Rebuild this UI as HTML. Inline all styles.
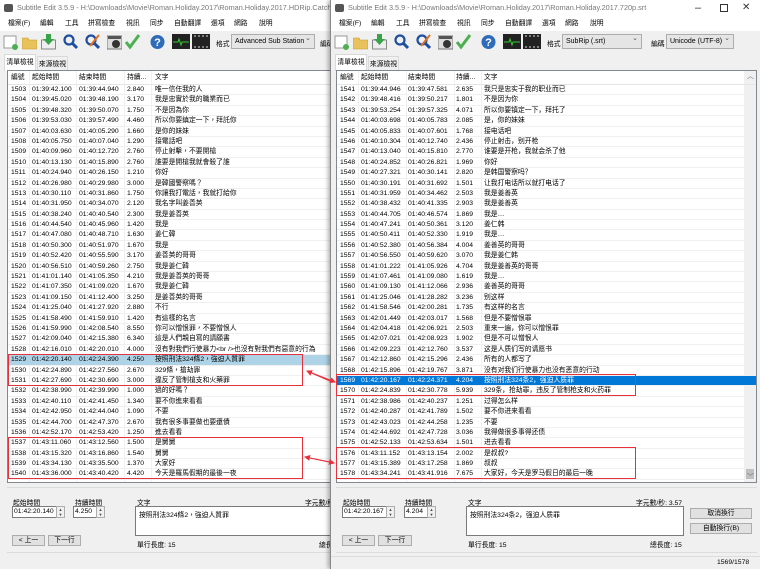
<!DOCTYPE html>
<html><head><meta charset="utf-8">
<style>
*{box-sizing:border-box;margin:0;padding:0}
body{width:760px;height:569px;overflow:hidden;background:#f0f0f0;font-family:"Liberation Sans","Noto Sans CJK TC",sans-serif;font-size:6.8px;color:#000;position:relative}
.win{position:absolute;top:0;height:569px;background:#f0f0f0;overflow:hidden}
#L{left:0;width:331px}
#R{left:330px;width:430px;border-left:1px solid #888;box-shadow:-2px 0 4px rgba(0,0,0,.3);font-family:"Liberation Sans","Noto Sans CJK SC",sans-serif}
.title{position:absolute;top:0;left:0;right:0;height:17px;background:#fff;color:#777;font-size:7.3px;line-height:16px;padding-left:17px;white-space:nowrap}
.title .ic{position:absolute;left:4px;top:4px;width:9px;height:8px;background:#555;border-radius:2px}
.menu{position:absolute;top:17px;left:0;right:0;height:14px;background:#fff;white-space:nowrap}
.menu span{position:absolute;line-height:14px;font-size:6.8px}
.tb{position:absolute;top:32px;left:0;right:0;height:20px}
.i{position:absolute;top:1px;width:15px;height:17px}
.cb{position:absolute;top:34px;height:15px;border:1px solid #adadad;background:#e5e5e5;line-height:13px;padding-left:3px;font-size:7px;white-space:nowrap;overflow:hidden}
.cb:after{content:"⌄";position:absolute;right:3px;top:-3px;color:#555}
.lab{position:absolute;font-size:6.8px;white-space:nowrap}
.tabs{position:absolute;top:54px;left:4px;height:16px}
.tab{position:absolute;top:0;height:16px;line-height:15px;text-align:center;border:1px solid #d9d9d9;border-bottom:none;font-size:6.8px;white-space:nowrap}
.list{position:absolute;top:70px;height:413px;background:#fff;border:1px solid #828790;overflow:hidden}
.hd{height:14px;line-height:14px;border-bottom:1px solid #e5e5e5;white-space:nowrap;position:relative}
.r{height:10.4px;line-height:10.4px;white-space:nowrap;position:relative;border-bottom:1px solid #f0f0f0}
.r span,.hd span{position:absolute;top:0}
.c1{left:3px}.c2{left:24px}.c3{left:71px}.c4{left:119px}.c5{left:147px}
.vl{position:absolute;top:0;bottom:0;width:1px;background:#f0f0f0}
.sel1{background:#aed3e6}
.sel2{background:#0078d7;color:#fff}
.box{position:absolute;border:1.5px solid #e8303a}
.inp{position:absolute;background:#fff;border:1px solid #7a7a7a;height:12px;line-height:10px;padding-left:1px;font-size:6.8px}
.spin{position:absolute;width:9px;height:12px;border:1px solid #adadad;background:#f0f0f0;font-size:4px;line-height:5px;text-align:center;color:#444}
.btn{position:absolute;height:11px;border:1px solid #adadad;background:#e1e1e1;font-size:6.8px;line-height:9px;text-align:center}
.ta{position:absolute;background:#fff;border:1px solid #7a7a7a;padding:2px 3px;font-size:6.8px}
.grp{position:absolute;top:487px;height:66px;border-top:1px solid #dcdcdc;border-bottom:1px solid #dcdcdc}
</style></head><body>

<div class="win" id="L">
 <div class="title"><div class="ic"></div>Subtitle Edit 3.5.9 - H:\Downloads\Movie\Roman.Holiday.2017\Roman.Holiday.2017.HDRip.CatchPlay.srt</div>
 <div class="menu"><span style="left:8px">檔案(F)</span><span style="left:40px">編輯</span><span style="left:65px">工具</span><span style="left:88px">拼寫檢查</span><span style="left:126px">視訊</span><span style="left:150px">同步</span><span style="left:174px">自動翻譯</span><span style="left:211px">選項</span><span style="left:234px">網路</span><span style="left:259px">說明</span></div>
 <div class="tb">
  <svg class="i" style="left:3px" viewBox="0 0 15 17"><rect x="1" y="3" width="12" height="12" fill="#fff" stroke="#999"/><circle cx="12" cy="14" r="3" fill="#4caf50"/></svg>
  <svg class="i" style="left:22px" viewBox="0 0 15 17"><path d="M0 5h6l1 2h8v9H0z" fill="#e8c25a" stroke="#c49a2a" stroke-width=".6"/></svg>
  <svg class="i" style="left:41px" viewBox="0 0 15 17"><rect x="0.5" y="7" width="14" height="9" fill="#eee" stroke="#888"/><path d="M5 1h5v5h3l-5.5 6L2 6h3z" fill="#3aa34a"/></svg>
  <svg class="i" style="left:63px" viewBox="0 0 15 17"><circle cx="6" cy="7" r="4.5" fill="none" stroke="#1f4ea1" stroke-width="2.2"/><path d="M9 10l5 5" stroke="#1f4ea1" stroke-width="3"/></svg>
  <svg class="i" style="left:85px" viewBox="0 0 15 17"><circle cx="6" cy="7" r="4.5" fill="none" stroke="#1f4ea1" stroke-width="2.2"/><path d="M9 10l5 5" stroke="#1f4ea1" stroke-width="3"/><path d="M14 2L5 13" stroke="#e07020" stroke-width="2"/></svg>
  <svg class="i" style="left:107px" viewBox="0 0 15 17"><rect x="0" y="3" width="15" height="13" fill="#ddd" stroke="#777"/><rect x="1" y="3" width="13" height="3" fill="#555"/><circle cx="9" cy="11" r="4" fill="#333"/></svg>
  <svg class="i" style="left:125px" viewBox="0 0 15 17"><path d="M1 9l4 5L14 2" fill="none" stroke="#4caf50" stroke-width="3"/></svg>
  <svg class="i" style="left:150px" viewBox="0 0 15 17"><circle cx="7.5" cy="9" r="7" fill="#2e6bb8"/><text x="7.5" y="13" font-size="11" fill="#fff" text-anchor="middle" font-family="Liberation Sans" font-weight="bold">?</text></svg>
  <svg class="i" style="left:172px;width:18px" viewBox="0 0 18 17"><rect x="0" y="1" width="18" height="15" fill="#222"/><path d="M1 9h5l1-3 2 6 1-3h7" stroke="#3c3" fill="none"/></svg>
  <svg class="i" style="left:192px;width:18px" viewBox="0 0 18 17"><rect x="0" y="1" width="18" height="15" fill="#222"/><path d="M2 3h2M6 3h2M10 3h2M14 3h2M2 14h2M6 14h2M10 14h2M14 14h2" stroke="#ddd"/></svg>
 </div>
 <div class="lab" style="left:216px;top:38px">格式</div>
 <div class="cb" style="left:231px;width:84px">Advanced Sub Station</div>
 <div class="lab" style="left:320px;top:38px">編碼</div>
 <div class="tabs"><div class="tab" style="left:0;width:32px;background:#fff;height:17px">清單檢視</div><div class="tab" style="left:33px;width:31px;top:2px;height:14px">來源檢視</div></div>
 <div class="list" style="left:7px;width:330px">
  <div class="vl" style="left:21px"></div><div class="vl" style="left:68px"></div><div class="vl" style="left:116px"></div><div class="vl" style="left:143px"></div>
  <div class="hd"><span class="c1">編號</span><span class="c2">起始時間</span><span class="c3">結束時間</span><span class="c4">持續...</span><span class="c5">文字</span></div>
  <div class="r"><span class="c1">1503</span><span class="c2">01:39:42.100</span><span class="c3">01:39:44.940</span><span class="c4">2.840</span><span class="c5">唯一信任我的人</span></div>
  <div class="r"><span class="c1">1504</span><span class="c2">01:39:45.020</span><span class="c3">01:39:48.190</span><span class="c4">3.170</span><span class="c5">我是忠實於我的職業而已</span></div>
  <div class="r"><span class="c1">1505</span><span class="c2">01:39:48.320</span><span class="c3">01:39:50.070</span><span class="c4">1.750</span><span class="c5">不是因為你</span></div>
  <div class="r"><span class="c1">1506</span><span class="c2">01:39:53.030</span><span class="c3">01:39:57.490</span><span class="c4">4.460</span><span class="c5">所以你要鎮定一下，拜託你</span></div>
  <div class="r"><span class="c1">1507</span><span class="c2">01:40:03.630</span><span class="c3">01:40:05.290</span><span class="c4">1.660</span><span class="c5">是你的妹妹</span></div>
  <div class="r"><span class="c1">1508</span><span class="c2">01:40:05.750</span><span class="c3">01:40:07.040</span><span class="c4">1.290</span><span class="c5">接電話吧</span></div>
  <div class="r"><span class="c1">1509</span><span class="c2">01:40:09.960</span><span class="c3">01:40:12.720</span><span class="c4">2.760</span><span class="c5">停止射擊，不要開槍</span></div>
  <div class="r"><span class="c1">1510</span><span class="c2">01:40:13.130</span><span class="c3">01:40:15.890</span><span class="c4">2.760</span><span class="c5">誰要是開槍我就會殺了誰</span></div>
  <div class="r"><span class="c1">1511</span><span class="c2">01:40:24.940</span><span class="c3">01:40:26.150</span><span class="c4">1.210</span><span class="c5">你好</span></div>
  <div class="r"><span class="c1">1512</span><span class="c2">01:40:26.980</span><span class="c3">01:40:29.980</span><span class="c4">3.000</span><span class="c5">是韓國警察嗎？</span></div>
  <div class="r"><span class="c1">1513</span><span class="c2">01:40:30.110</span><span class="c3">01:40:31.860</span><span class="c4">1.750</span><span class="c5">你讓我打電話，我就打給你</span></div>
  <div class="r"><span class="c1">1514</span><span class="c2">01:40:31.950</span><span class="c3">01:40:34.070</span><span class="c4">2.120</span><span class="c5">我名字叫姜善英</span></div>
  <div class="r"><span class="c1">1515</span><span class="c2">01:40:38.240</span><span class="c3">01:40:40.540</span><span class="c4">2.300</span><span class="c5">我是姜善英</span></div>
  <div class="r"><span class="c1">1516</span><span class="c2">01:40:44.540</span><span class="c3">01:40:45.960</span><span class="c4">1.420</span><span class="c5">我是</span></div>
  <div class="r"><span class="c1">1517</span><span class="c2">01:40:47.080</span><span class="c3">01:40:48.710</span><span class="c4">1.630</span><span class="c5">姜仁韓</span></div>
  <div class="r"><span class="c1">1518</span><span class="c2">01:40:50.300</span><span class="c3">01:40:51.970</span><span class="c4">1.670</span><span class="c5">我是</span></div>
  <div class="r"><span class="c1">1519</span><span class="c2">01:40:52.420</span><span class="c3">01:40:55.590</span><span class="c4">3.170</span><span class="c5">姜善英的哥哥</span></div>
  <div class="r"><span class="c1">1520</span><span class="c2">01:40:56.510</span><span class="c3">01:40:59.260</span><span class="c4">2.750</span><span class="c5">我是姜仁韓</span></div>
  <div class="r"><span class="c1">1521</span><span class="c2">01:41:01.140</span><span class="c3">01:41:05.350</span><span class="c4">4.210</span><span class="c5">我是姜善英的哥哥</span></div>
  <div class="r"><span class="c1">1522</span><span class="c2">01:41:07.350</span><span class="c3">01:41:09.020</span><span class="c4">1.670</span><span class="c5">我是姜仁韓</span></div>
  <div class="r"><span class="c1">1523</span><span class="c2">01:41:09.150</span><span class="c3">01:41:12.400</span><span class="c4">3.250</span><span class="c5">是姜善英的哥哥</span></div>
  <div class="r"><span class="c1">1524</span><span class="c2">01:41:25.040</span><span class="c3">01:41:27.920</span><span class="c4">2.880</span><span class="c5">不行</span></div>
  <div class="r"><span class="c1">1525</span><span class="c2">01:41:58.490</span><span class="c3">01:41:59.910</span><span class="c4">1.420</span><span class="c5">有這樣的名言</span></div>
  <div class="r"><span class="c1">1526</span><span class="c2">01:41:59.990</span><span class="c3">01:42:08.540</span><span class="c4">8.550</span><span class="c5">你可以憎恨罪，不要憎恨人</span></div>
  <div class="r"><span class="c1">1527</span><span class="c2">01:42:09.040</span><span class="c3">01:42:15.380</span><span class="c4">6.340</span><span class="c5">這是人們親自寫的請願書</span></div>
  <div class="r"><span class="c1">1528</span><span class="c2">01:42:16.010</span><span class="c3">01:42:20.010</span><span class="c4">4.000</span><span class="c5">沒有對我們行使暴力&lt;br /&gt;也沒有對我們有惡意的行為</span></div>
  <div class="r sel1"><span class="c1">1529</span><span class="c2">01:42:20.140</span><span class="c3">01:42:24.390</span><span class="c4">4.250</span><span class="c5">按照刑法324條2，強迫人質罪</span></div>
  <div class="r"><span class="c1">1530</span><span class="c2">01:42:24.890</span><span class="c3">01:42:27.560</span><span class="c4">2.670</span><span class="c5">329條，搶劫罪</span></div>
  <div class="r"><span class="c1">1531</span><span class="c2">01:42:27.690</span><span class="c3">01:42:30.690</span><span class="c4">3.000</span><span class="c5">違反了管制槍支和火藥罪</span></div>
  <div class="r"><span class="c1">1532</span><span class="c2">01:42:38.990</span><span class="c3">01:42:39.990</span><span class="c4">1.000</span><span class="c5">過的好嗎？</span></div>
  <div class="r"><span class="c1">1533</span><span class="c2">01:42:40.110</span><span class="c3">01:42:41.450</span><span class="c4">1.340</span><span class="c5">要不你進來看看</span></div>
  <div class="r"><span class="c1">1534</span><span class="c2">01:42:42.950</span><span class="c3">01:42:44.040</span><span class="c4">1.090</span><span class="c5">不要</span></div>
  <div class="r"><span class="c1">1535</span><span class="c2">01:42:44.700</span><span class="c3">01:42:47.370</span><span class="c4">2.670</span><span class="c5">我有很多事要做也要還債</span></div>
  <div class="r"><span class="c1">1536</span><span class="c2">01:42:52.170</span><span class="c3">01:42:53.420</span><span class="c4">1.250</span><span class="c5">進去看看</span></div>
  <div class="r"><span class="c1">1537</span><span class="c2">01:43:11.060</span><span class="c3">01:43:12.560</span><span class="c4">1.500</span><span class="c5">是舅舅</span></div>
  <div class="r"><span class="c1">1538</span><span class="c2">01:43:15.320</span><span class="c3">01:43:16.860</span><span class="c4">1.540</span><span class="c5">舅舅</span></div>
  <div class="r"><span class="c1">1539</span><span class="c2">01:43:34.130</span><span class="c3">01:43:35.500</span><span class="c4">1.370</span><span class="c5">大家好</span></div>
  <div class="r"><span class="c1">1540</span><span class="c2">01:43:36.000</span><span class="c3">01:43:40.420</span><span class="c4">4.420</span><span class="c5">今天是羅馬假期的最後一夜</span></div>
 </div>
 <div class="grp" style="left:7px;width:330px"></div>
 <div class="lab" style="left:13px;top:497px">起始時間</div>
 <div class="inp" style="left:12px;top:506px;width:45px">01:42:20.140</div><div class="spin" style="left:56px;top:506px">▲<br>▼</div>
 <div class="lab" style="left:75px;top:497px">持續時間</div>
 <div class="inp" style="left:73px;top:506px;width:24px">4.250</div><div class="spin" style="left:96px;top:506px">▲<br>▼</div>
 <div class="lab" style="left:137px;top:497px">文字</div>
 <div class="lab" style="left:305px;top:497px">字元數/秒</div>
 <div class="ta" style="left:135px;top:506px;width:200px;height:30px">按照刑法324條2，強迫人質罪</div>
 <div class="btn" style="left:12px;top:535px;width:33px">&lt; 上一</div>
 <div class="btn" style="left:48px;top:535px;width:33px">下一行</div>
 <div class="lab" style="left:137px;top:539px">單行長度: 15</div>
 <div class="lab" style="left:319px;top:539px">總長</div>
</div>

<div class="win" id="R">
 <div class="title"><div class="ic"></div>Subtitle Edit 3.5.9 - H:\Downloads\Movie\Roman.Holiday.2017\Roman.Holiday.2017.720p.srt
  <span style="position:absolute;left:364px;top:0;color:#333;font-size:11px">–</span>
  <span style="position:absolute;left:389px;top:4px;width:8px;height:8px;border:1px solid #333"></span>
  <span style="position:absolute;left:411px;top:0;color:#333;font-size:10px">✕</span></div>
 <div class="menu"><span style="left:8px">檔案(F)</span><span style="left:40px">編輯</span><span style="left:65px">工具</span><span style="left:88px">拼寫檢查</span><span style="left:126px">視訊</span><span style="left:150px">同步</span><span style="left:174px">自動翻譯</span><span style="left:211px">選項</span><span style="left:234px">網路</span><span style="left:259px">說明</span></div>
 <div class="tb">
  <svg class="i" style="left:3px" viewBox="0 0 15 17"><rect x="1" y="3" width="12" height="12" fill="#fff" stroke="#999"/><circle cx="12" cy="14" r="3" fill="#4caf50"/></svg>
  <svg class="i" style="left:22px" viewBox="0 0 15 17"><path d="M0 5h6l1 2h8v9H0z" fill="#e8c25a" stroke="#c49a2a" stroke-width=".6"/></svg>
  <svg class="i" style="left:41px" viewBox="0 0 15 17"><rect x="0.5" y="7" width="14" height="9" fill="#eee" stroke="#888"/><path d="M5 1h5v5h3l-5.5 6L2 6h3z" fill="#3aa34a"/></svg>
  <svg class="i" style="left:63px" viewBox="0 0 15 17"><circle cx="6" cy="7" r="4.5" fill="none" stroke="#1f4ea1" stroke-width="2.2"/><path d="M9 10l5 5" stroke="#1f4ea1" stroke-width="3"/></svg>
  <svg class="i" style="left:85px" viewBox="0 0 15 17"><circle cx="6" cy="7" r="4.5" fill="none" stroke="#1f4ea1" stroke-width="2.2"/><path d="M9 10l5 5" stroke="#1f4ea1" stroke-width="3"/><path d="M14 2L5 13" stroke="#e07020" stroke-width="2"/></svg>
  <svg class="i" style="left:107px" viewBox="0 0 15 17"><rect x="0" y="3" width="15" height="13" fill="#ddd" stroke="#777"/><rect x="1" y="3" width="13" height="3" fill="#555"/><circle cx="9" cy="11" r="4" fill="#333"/></svg>
  <svg class="i" style="left:125px" viewBox="0 0 15 17"><path d="M1 9l4 5L14 2" fill="none" stroke="#4caf50" stroke-width="3"/></svg>
  <svg class="i" style="left:150px" viewBox="0 0 15 17"><circle cx="7.5" cy="9" r="7" fill="#2e6bb8"/><text x="7.5" y="13" font-size="11" fill="#fff" text-anchor="middle" font-family="Liberation Sans" font-weight="bold">?</text></svg>
  <svg class="i" style="left:172px;width:18px" viewBox="0 0 18 17"><rect x="0" y="1" width="18" height="15" fill="#222"/><path d="M1 9h5l1-3 2 6 1-3h7" stroke="#3c3" fill="none"/></svg>
  <svg class="i" style="left:192px;width:18px" viewBox="0 0 18 17"><rect x="0" y="1" width="18" height="15" fill="#222"/><path d="M2 3h2M6 3h2M10 3h2M14 3h2M2 14h2M6 14h2M10 14h2M14 14h2" stroke="#ddd"/></svg>
 </div>
 <div class="lab" style="left:216px;top:38px">格式</div>
 <div class="cb" style="left:231px;width:80px">SubRip (.srt)</div>
 <div class="lab" style="left:320px;top:38px">編碼</div>
 <div class="cb" style="left:335px;width:68px">Unicode (UTF-8)</div>
 <div class="tabs"><div class="tab" style="left:0;width:32px;background:#fff;height:17px">清單檢視</div><div class="tab" style="left:33px;width:31px;top:2px;height:14px">來源檢視</div></div>
 <div class="list" style="left:5px;width:421px">
  <div class="vl" style="left:21px"></div><div class="vl" style="left:69px"></div><div class="vl" style="left:117px"></div><div class="vl" style="left:144px"></div>
  <div style="position:absolute;right:0;top:0;width:12px;height:411px;background:#f0f0f0"><div style="position:absolute;top:397px;left:2px;width:8px;height:11px;background:#c0c0c0"></div><div style="position:absolute;top:0;left:3px;font-size:7px;color:#666">︿</div><div style="position:absolute;bottom:0;left:3px;font-size:7px;color:#666">﹀</div></div>
  <div class="hd"><span class="c1">編號</span><span class="c2">起始時間</span><span class="c3">結束時間</span><span class="c4">持續...</span><span class="c5">文字</span></div>
  <div class="r"><span class="c1">1541</span><span class="c2">01:39:44.946</span><span class="c3">01:39:47.581</span><span class="c4">2.635</span><span class="c5">我只是忠实于我的职业而已</span></div>
  <div class="r"><span class="c1">1542</span><span class="c2">01:39:48.416</span><span class="c3">01:39:50.217</span><span class="c4">1.801</span><span class="c5">不是因为你</span></div>
  <div class="r"><span class="c1">1543</span><span class="c2">01:39:53.254</span><span class="c3">01:39:57.325</span><span class="c4">4.071</span><span class="c5">所以你要镇定一下，拜托了</span></div>
  <div class="r"><span class="c1">1544</span><span class="c2">01:40:03.698</span><span class="c3">01:40:05.783</span><span class="c4">2.085</span><span class="c5">是，你的妹妹</span></div>
  <div class="r"><span class="c1">1545</span><span class="c2">01:40:05.833</span><span class="c3">01:40:07.601</span><span class="c4">1.768</span><span class="c5">接电话吧</span></div>
  <div class="r"><span class="c1">1546</span><span class="c2">01:40:10.304</span><span class="c3">01:40:12.740</span><span class="c4">2.436</span><span class="c5">停止射击，别开枪</span></div>
  <div class="r"><span class="c1">1547</span><span class="c2">01:40:13.040</span><span class="c3">01:40:15.810</span><span class="c4">2.770</span><span class="c5">谁要是开枪，我就会杀了他</span></div>
  <div class="r"><span class="c1">1548</span><span class="c2">01:40:24.852</span><span class="c3">01:40:26.821</span><span class="c4">1.969</span><span class="c5">你好</span></div>
  <div class="r"><span class="c1">1549</span><span class="c2">01:40:27.321</span><span class="c3">01:40:30.141</span><span class="c4">2.820</span><span class="c5">是韩国警察吗？</span></div>
  <div class="r"><span class="c1">1550</span><span class="c2">01:40:30.191</span><span class="c3">01:40:31.692</span><span class="c4">1.501</span><span class="c5">让我打电话所以就打电话了</span></div>
  <div class="r"><span class="c1">1551</span><span class="c2">01:40:31.959</span><span class="c3">01:40:34.462</span><span class="c4">2.503</span><span class="c5">我是姜善英</span></div>
  <div class="r"><span class="c1">1552</span><span class="c2">01:40:38.432</span><span class="c3">01:40:41.335</span><span class="c4">2.903</span><span class="c5">我是姜善英</span></div>
  <div class="r"><span class="c1">1553</span><span class="c2">01:40:44.705</span><span class="c3">01:40:46.574</span><span class="c4">1.869</span><span class="c5">我是…</span></div>
  <div class="r"><span class="c1">1554</span><span class="c2">01:40:47.241</span><span class="c3">01:40:50.361</span><span class="c4">3.120</span><span class="c5">姜仁韩</span></div>
  <div class="r"><span class="c1">1555</span><span class="c2">01:40:50.411</span><span class="c3">01:40:52.330</span><span class="c4">1.919</span><span class="c5">我是…</span></div>
  <div class="r"><span class="c1">1556</span><span class="c2">01:40:52.380</span><span class="c3">01:40:56.384</span><span class="c4">4.004</span><span class="c5">姜善英的哥哥</span></div>
  <div class="r"><span class="c1">1557</span><span class="c2">01:40:56.550</span><span class="c3">01:40:59.620</span><span class="c4">3.070</span><span class="c5">我是姜仁韩</span></div>
  <div class="r"><span class="c1">1558</span><span class="c2">01:41:01.222</span><span class="c3">01:41:05.926</span><span class="c4">4.704</span><span class="c5">我是姜善英的哥哥</span></div>
  <div class="r"><span class="c1">1559</span><span class="c2">01:41:07.461</span><span class="c3">01:41:09.080</span><span class="c4">1.619</span><span class="c5">我是…</span></div>
  <div class="r"><span class="c1">1560</span><span class="c2">01:41:09.130</span><span class="c3">01:41:12.066</span><span class="c4">2.936</span><span class="c5">姜善英的哥哥</span></div>
  <div class="r"><span class="c1">1561</span><span class="c2">01:41:25.046</span><span class="c3">01:41:28.282</span><span class="c4">3.236</span><span class="c5">别这样</span></div>
  <div class="r"><span class="c1">1562</span><span class="c2">01:41:58.546</span><span class="c3">01:42:00.281</span><span class="c4">1.735</span><span class="c5">有这样的名言</span></div>
  <div class="r"><span class="c1">1563</span><span class="c2">01:42:01.449</span><span class="c3">01:42:03.017</span><span class="c4">1.568</span><span class="c5">但是不要憎恨罪</span></div>
  <div class="r"><span class="c1">1564</span><span class="c2">01:42:04.418</span><span class="c3">01:42:06.921</span><span class="c4">2.503</span><span class="c5">重来一遍，你可以憎恨罪</span></div>
  <div class="r"><span class="c1">1565</span><span class="c2">01:42:07.021</span><span class="c3">01:42:08.923</span><span class="c4">1.902</span><span class="c5">但是不可以憎恨人</span></div>
  <div class="r"><span class="c1">1566</span><span class="c2">01:42:09.223</span><span class="c3">01:42:12.760</span><span class="c4">3.537</span><span class="c5">这是人质们写的请愿书</span></div>
  <div class="r"><span class="c1">1567</span><span class="c2">01:42:12.860</span><span class="c3">01:42:15.296</span><span class="c4">2.436</span><span class="c5">所有的人都写了</span></div>
  <div class="r"><span class="c1">1568</span><span class="c2">01:42:15.896</span><span class="c3">01:42:19.767</span><span class="c4">3.871</span><span class="c5">没有对我们行使暴力也没有恶意的行动</span></div>
  <div class="r sel2"><span class="c1">1569</span><span class="c2">01:42:20.167</span><span class="c3">01:42:24.371</span><span class="c4">4.204</span><span class="c5">按照刑法324条2，强迫人质罪</span></div>
  <div class="r"><span class="c1">1570</span><span class="c2">01:42:24.839</span><span class="c3">01:42:30.778</span><span class="c4">5.939</span><span class="c5">329条，抢劫罪，违反了管制枪支和火药罪</span></div>
  <div class="r"><span class="c1">1571</span><span class="c2">01:42:38.986</span><span class="c3">01:42:40.237</span><span class="c4">1.251</span><span class="c5">过得怎么样</span></div>
  <div class="r"><span class="c1">1572</span><span class="c2">01:42:40.287</span><span class="c3">01:42:41.789</span><span class="c4">1.502</span><span class="c5">要不你进来看看</span></div>
  <div class="r"><span class="c1">1573</span><span class="c2">01:42:43.023</span><span class="c3">01:42:44.258</span><span class="c4">1.235</span><span class="c5">不要</span></div>
  <div class="r"><span class="c1">1574</span><span class="c2">01:42:44.692</span><span class="c3">01:42:47.728</span><span class="c4">3.036</span><span class="c5">我得做很多事得还债</span></div>
  <div class="r"><span class="c1">1575</span><span class="c2">01:42:52.133</span><span class="c3">01:42:53.634</span><span class="c4">1.501</span><span class="c5">进去看看</span></div>
  <div class="r"><span class="c1">1576</span><span class="c2">01:43:11.152</span><span class="c3">01:43:13.154</span><span class="c4">2.002</span><span class="c5">是叔叔?</span></div>
  <div class="r"><span class="c1">1577</span><span class="c2">01:43:15.389</span><span class="c3">01:43:17.258</span><span class="c4">1.869</span><span class="c5">叔叔</span></div>
  <div class="r"><span class="c1">1578</span><span class="c2">01:43:34.241</span><span class="c3">01:43:41.916</span><span class="c4">7.675</span><span class="c5">大家好，今天是罗马假日的最后一晚</span></div>
 </div>
 <div class="grp" style="left:5px;width:421px"></div>
 <div class="lab" style="left:12px;top:497px">起始時間</div>
 <div class="inp" style="left:11px;top:506px;width:45px">01:42:20.167</div><div class="spin" style="left:55px;top:506px">▲<br>▼</div>
 <div class="lab" style="left:74px;top:497px">持續時間</div>
 <div class="inp" style="left:73px;top:506px;width:24px">4.204</div><div class="spin" style="left:96px;top:506px">▲<br>▼</div>
 <div class="lab" style="left:137px;top:497px">文字</div>
 <div class="lab" style="left:305px;top:497px">字元數/秒: 3.57</div>
 <div class="ta" style="left:135px;top:506px;width:218px;height:30px">按照刑法324条2，强迫人质罪</div>
 <div class="btn" style="left:359px;top:508px;width:62px">取消換行</div>
 <div class="btn" style="left:359px;top:523px;width:62px">自動換行(B)</div>
 <div class="btn" style="left:11px;top:535px;width:33px">&lt; 上一</div>
 <div class="btn" style="left:47px;top:535px;width:34px">下一行</div>
 <div class="lab" style="left:137px;top:539px">單行長度: 15</div>
 <div class="lab" style="left:319px;top:539px">總長度: 15</div>
 <div style="position:absolute;left:0;right:0;top:556px;height:13px;border-top:1px solid #dcdcdc"></div>
 <div class="lab" style="left:386px;top:559px">1569/1578</div>
</div>

<div class="box" style="left:8px;top:354px;width:295px;height:32px"></div>
<div class="box" style="left:8px;top:437px;width:295px;height:42px"></div>
<div class="box" style="left:336px;top:374px;width:300px;height:22px"></div>
<div class="box" style="left:336px;top:447px;width:300px;height:32px"></div>
<svg style="position:absolute;left:0;top:0" width="760" height="569">
 <defs><marker id="a" markerWidth="6" markerHeight="6" refX="5" refY="3" orient="auto"><path d="M0 0L6 3L0 6z" fill="#e8303a"/></marker></defs>
 <line x1="330" y1="381" x2="307" y2="371" stroke="#e8303a" stroke-width="1" marker-end="url(#a)"/>
 <line x1="312" y1="373" x2="335" y2="382" stroke="#e8303a" stroke-width="1" marker-end="url(#a)"/>
 <line x1="310" y1="458" x2="334" y2="463" stroke="#e8303a" stroke-width="1" marker-end="url(#a)"/>
 <line x1="330" y1="462" x2="305" y2="457" stroke="#e8303a" stroke-width="1" marker-end="url(#a)"/>
</svg>
</body></html>
